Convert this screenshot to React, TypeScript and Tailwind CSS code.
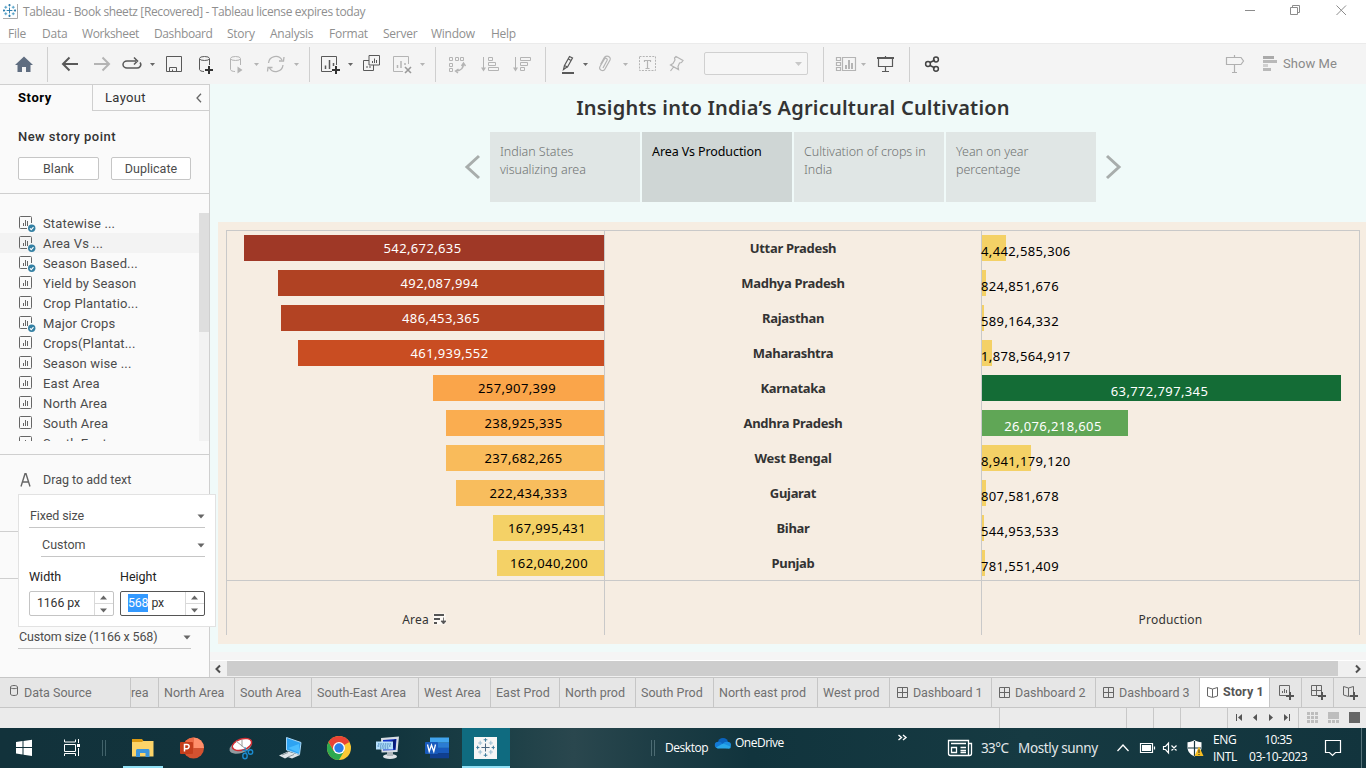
import type { ReactNode } from 'react';

const UI = "font-['Roboto','Liberation_Sans',sans-serif]";
const SEGOE = "font-['Open_Sans','Noto_Sans',sans-serif]";
const CHART = "font-['Noto_Sans','Open_Sans',sans-serif]";

type SegProps = { x: number; to: number; y: number; h: number; children?: ReactNode };

/* A slice of a bar; its drawing uses window coordinates. */
function Seg({ x, to, y, h, children }: SegProps) {
  return (
    <svg className="block shrink-0" width={to - x} height={h} viewBox={`${x} ${y} ${to - x} ${h}`} fill="none">
      {children}
    </svg>
  );
}

function Tool({ x, to, children }: { x: number; to: number; children?: ReactNode }) {
  return (
    <Seg x={x} to={to} y={43} h={41}>
      {children}
    </Seg>
  );
}

function Sep({ x }: { x: number }) {
  return <path d={`M${x + 0.5} 47V82`} stroke="#cfcfcf" />;
}

function Drop({ x, c = '#666' }: { x: number; c?: string }) {
  return <path d={`M${x - 2.5} 63h5l-2.5 3z`} fill={c} />;
}

const D = '#595959';
const L = '#b4b4b4';

function TableauMark({ cx, cy, s, light }: { cx: number; cy: number; s: number; light?: boolean }) {
  const a = light ? '#3f7d9e' : '#2678a8';
  const b = light ? '#9dbfd4' : '#4a9bc4';
  return (
    <g transform={`translate(${cx} ${cy}) scale(${s})`} strokeWidth={light ? 1 : 1.3}>
      <path d="M-4 0h8M0-4v8" stroke={light ? '#4a6680' : a} />
      <path d="M-7.2-4.5h4M-5.2-6.5v4M3.2-4.5h4M5.2-6.5v4M-7.2 4.5h4M-5.2 2.5v4M3.2 4.5h4M5.2 2.5v4" stroke={b} />
      <path d="M-1.8-7.5h3.6M0-9v3.4M-1.8 7.5h3.6M0 5.6v3.4M-9 0h3M-7.7-1.8v3.6M6 0h3M7.7-1.8v3.6" stroke={a} />
    </g>
  );
}

function TitleBar() {
  return (
    <header className={`flex h-6 shrink-0 bg-white ${SEGOE}`}>
      <svg width="22" height="24" viewBox="0 0 22 24" fill="none" className="shrink-0">
        <path d="M3 18.5h14.5V4" stroke="#aaa" />
        <TableauMark cx={9.5} cy={10.5} s={0.72} />
      </svg>
      <span className="ml-px text-[12px] leading-6 tracking-[-0.38px] text-[#8f8f8f]">
        Tableau - Book sheetz [Recovered] - Tableau license expires today
      </span>
      <svg width="136" height="24" viewBox="1230 0 136 24" fill="none" stroke="#8c8c8c" className="ml-auto shrink-0">
        <path d="M1245 10.5h10M1290.5 7.5h7v7h-7zM1292.500 7.500v-2h7v7h-2M1336.500 5.500l9.500 9.500M1346 5.500l-9.500 9.500" />
      </svg>
    </header>
  );
}

function MenuBar() {
  const items: [string, string][] = [
    ['File', 'w-[34px]'],
    ['Data', 'w-10'],
    ['Worksheet', 'w-[72px] tracking-[-0.38px]'],
    ['Dashboard', 'w-[73px] tracking-[-0.38px]'],
    ['Story', 'w-[43px]'],
    ['Analysis', 'w-[59px]'],
    ['Format', 'w-[54px]'],
    ['Server', 'w-12'],
    ['Window', 'w-[60px]'],
    ['Help', 'w-10'],
  ];
  return (
    <nav className={`flex h-[19px] shrink-0 bg-white pl-2 text-[12px] leading-[19px] tracking-[-0.25px] text-[#8f8f8f] ${SEGOE}`}>
      {items.map(([t, w]) => (
        <span key={t} className={`shrink-0 whitespace-nowrap ${w}`}>
          {t}
        </span>
      ))}
    </nav>
  );
}

function Toolbar() {
  return (
    <div className="flex h-[41px] shrink-0 border-t border-[#ebebeb] bg-[#f4f4f4] [&>svg]:-mt-px">
      <Tool x={0} to={50}>
        <path d="M24 56.500l9 8.500h-2.500V72h-4.500v-5h-4v5h-4.500v-7H15z" fill="#5f6d80" />
        <Sep x={47} />
      </Tool>
      <Tool x={50} to={116}>
        <path d="M63 64h15M69.500 57.500L63 64l6.500 6.500" stroke={D} strokeWidth="2" />
        <path d="M94 64h15M102.500 57.500L109 64l-6.500 6.500" stroke={L} strokeWidth="2" />
      </Tool>
      <Tool x={116} to={160}>
        <path d="M136 61h-9a4 3.500 0 000 7h9a4 3.500 0 004-5.500M134 57.500l3.500 3.500-3.500 3.500" stroke={D} strokeWidth="1.500" />
        <Drop x={152.5} />
      </Tool>
      <Tool x={160} to={190}>
        <path d="M166.500 56.500h15v15h-15zM169.500 71v-3.500h7V71M172.500 71v-1.500" stroke={D} />
      </Tool>
      <Tool x={190} to={222}>
        <path d="M199.500 59v10.500c0 1 2 2 4.500 2M209.500 59v6" stroke={D} />
        <ellipse cx="204.500" cy="58.500" rx="5" ry="2" stroke={D} />
        <path d="M209 66v8M205 70h8" stroke="#333" strokeWidth="2" />
      </Tool>
      <Tool x={222} to={262}>
        <path d="M230.500 59v10.500c0 1 2 2 4.500 2M240.500 59v6" stroke={L} />
        <ellipse cx="235.500" cy="58.500" rx="5" ry="2" stroke={L} />
        <path d="M237.500 66.500v7l5-3.500z" fill={L} />
        <Drop x={256.5} c={L} />
      </Tool>
      <Tool x={262} to={315}>
        <path d="M268.500 63a7.300 7.300 0 0113.500-3M283 65a7.300 7.300 0 01-13.500 3M279 61h4.500l.5-4M272.500 67.500H268l-.5 4" stroke={L} strokeWidth="1.300" />
        <Drop x={296.5} c={L} />
        <Sep x={309} />
      </Tool>
      <Tool x={315} to={358}>
        <path d="M332 71.500h-10.500v-15h15V65" stroke={D} />
        <path d="M325.500 69v-3.500M329.500 69v-9M333.500 66v-3" stroke={D} strokeWidth="1.500" />
        <path d="M336 66v8M332 70h8" stroke="#333" strokeWidth="2" />
        <Drop x={350.5} />
      </Tool>
      <Tool x={358} to={386}>
        <path d="M369 55.500h10.500v9.500H369zM369 60.500h-5.500v10h10V65M367 68v-2M370 68v-2" stroke={D} />
        <path d="M372.500 63v-2M374.500 63v-4.500M376.500 63v-3" stroke={D} />
      </Tool>
      <Tool x={386} to={440}>
        <path d="M403 71.500h-9.500v-15h15V64" stroke={L} />
        <path d="M397.500 68v-3M401 68v-7M405 65v-2" stroke={L} strokeWidth="1.500" />
        <path d="M405 67l6 6M411 67l-6 6" stroke="#999" strokeWidth="1.600" />
        <Drop x={422.5} c={L} />
        <Sep x={435} />
      </Tool>
      <Tool x={440} to={474}>
        <path d="M449.500 57.500h3v3h-3zM455.500 57.500h3v3h-3zM460.500 57.500h3v3h-3zM449.500 63.500h3v3h-3zM449.500 68.500h3v3h-3z" stroke={L} />
        <path d="M463.500 64c0 4-2.500 6.500-7.500 7M461.500 66l2-3 2 3M458.500 69l-3 2 2.500 2" stroke={L} strokeWidth="1.400" />
      </Tool>
      <Tool x={474} to={506}>
        <path d="M483.500 57v13M488.500 57.500h4v3h-4zM488.500 62.500h7v3h-7zM488.500 67.500h10v3h-10z" stroke={L} />
        <path d="M481 67.500h5l-2.500 4z" fill={L} />
      </Tool>
      <Tool x={506} to={552}>
        <path d="M515.500 57v13M520.500 57.500h10v3h-10zM520.500 62.500h7v3h-7zM520.500 67.500h4v3h-4z" stroke={L} />
        <path d="M513 67.500h5l-2.500 4z" fill={L} />
        <Sep x={545} />
      </Tool>
      <Tool x={552} to={592}>
        <path d="M562 73h12" stroke={D} strokeWidth="2" />
        <path d="M569.500 56.500l3 1.500-5 9-3-1.500zM564.500 65.500l-1 4 3.500-2.500M568.500 59l2.500 1.500" stroke={D} strokeWidth="1.200" />
        <Drop x={585.5} />
      </Tool>
      <Tool x={592} to={632}>
        <path d="M600.500 64.500l3.500-6.500c2-3.500 7.500-1.500 6 2l-5 9c-1.500 3-7 1-5-2.500l4.500-7.500c1-1.500 3.500-.5 2.500 1.500l-4 7.500" stroke={L} strokeWidth="1.200" />
        <Drop x={625.5} c={L} />
      </Tool>
      <Tool x={632} to={664}>
        <path d="M639.500 56.500h16v14h-16z" stroke={L} strokeDasharray="2 1.200" />
        <path d="M644.500 62v-1.500h6V62M647.500 60.500v8M645.500 68.500h4" stroke={L} strokeWidth="1.200" />
      </Tool>
      <Tool x={664} to={704}>
        <path d="M676 56.500l7 4-1.500 2-2 .500-1.500 3.500.500 3-8-4.500 2.500-1.500 2-3.500-.5-2zM673.500 67l-3 4" stroke={L} strokeWidth="1.200" />
      </Tool>
      <div className="mt-2 h-[23px] w-[104px] shrink-0 rounded-[2px] border border-[#d0d0d0] bg-[#f6f6f6]">
        <svg width="102" height="21" className="block">
          <path d="M90 9h7l-3.500 4z" fill="#c8c8c8" />
        </svg>
      </div>
      <Tool x={808} to={870}>
        <Sep x={823} />
        <path d="M836.500 57.500h4v3h-4zM836.500 62.500h4v3h-4zM836.500 67.500h4v3h-4zM842.500 57.500h13v13h-13z" stroke={L} strokeWidth="1.200" />
        <path d="M846 69v-4M849 69v-9M852 69v-6" stroke={L} strokeWidth="2" />
        <Drop x={863.5} c={L} />
      </Tool>
      <Tool x={870} to={915}>
        <path d="M877 58h17" stroke={D} strokeWidth="2" />
        <path d="M878.500 58v8.500h14V58M885.500 56v1M885.500 67v4M882 71.500h7" stroke={D} strokeWidth="1.200" />
        <Sep x={909} />
      </Tool>
      <Tool x={915} to={950}>
        <path d="M930 62.500l5-2.500M930 65.500l5 2.500" stroke="#444" strokeWidth="1.500" />
        <circle cx="928" cy="64" r="2.400" stroke="#444" strokeWidth="1.500" />
        <circle cx="936" cy="59.500" r="2.400" stroke="#444" strokeWidth="1.500" />
        <circle cx="936" cy="68.800" r="2.400" stroke="#444" strokeWidth="1.500" />
      </Tool>
      <div className="flex-1" />
      <Tool x={1220} to={1282}>
        <path d="M1226.500 57.500h14.500l2.500 3.500-2.500 3.500h-14.500zM1234.500 55v2.500M1234.500 65v7M1232 72.500h5" stroke="#b0b0b0" strokeWidth="1.200" />
        <path d="M1263 56h11v3h-11z" fill="#aaa" />
        <path d="M1263 60h14v3h-14zM1263 68h8v3h-8z" fill="#b9b9b9" />
        <path d="M1263 64h5v3h-5z" fill="#d0d0d0" />
      </Tool>
      <span className={`w-[84px] shrink-0 pl-px text-[13px] leading-[39px] tracking-[0.05px] text-[#8a8a8a] ${UI}`}>Show Me</span>
    </div>
  );
}

function SheetIcon({ checked }: { checked?: boolean }) {
  return (
    <svg width="18" height="20" viewBox="0 0 18 20" fill="none" className="shrink-0">
      <path
        d={
          checked
            ? 'M8 15.500H1.500a1 1 0 01-1-1v-10a1 1 0 011-1h10a1 1 0 011 1V10'
            : 'M1.500 3.500h10a1 1 0 011 1v10a1 1 0 01-1 1h-10a1 1 0 01-1-1v-10a1 1 0 011-1z'
        }
        stroke="#666"
      />
      <path d="M4.500 13v-3M6.500 13V7M8.500 13V8" stroke="#666" />
      {checked && (
        <>
          <circle cx="12.700" cy="15.300" r="3.700" fill="#3480a3" />
          <path d="M10.900 15.300l1.400 1.300 2.200-2.400" stroke="#fff" strokeWidth="1.100" />
        </>
      )}
    </svg>
  );
}

function Caret() {
  return (
    <svg width="8" height="5" viewBox="0 0 8 5" className="shrink-0">
      <path d="M.5.500h7L4 4.500z" fill="#666" />
    </svg>
  );
}

function Spinner({ focus, children }: { focus?: boolean; children: ReactNode }) {
  return (
    <div className={`flex h-[25px] w-[85px] rounded-[2px] border bg-white ${focus ? 'border-[#555]' : 'border-[#c4c4c4]'}`}>
      <span className="w-16 pl-[7px] text-[12.300px] leading-[23px] tracking-[-0.1px] whitespace-nowrap text-[#333]">{children}</span>
      <svg width="19" height="23" viewBox="0 0 19 23" fill="none">
        <path d="M.5 0v23M0 11.500h19" stroke="#d9d9d9" />
        <path d="M6 7.500h7L9.500 3.500zM6 16.500h7l-3.500 4z" fill="#666" />
      </svg>
    </div>
  );
}

const SHEETS: [string, boolean][] = [
  ['Statewise ...', true],
  ['Area Vs ...', true],
  ['Season Based...', true],
  ['Yield by Season', false],
  ['Crop Plantatio...', false],
  ['Major Crops', true],
  ['Crops(Plantat...', false],
  ['Season wise ...', false],
  ['East Area', false],
  ['North Area', false],
  ['South Area', false],
  ['South East...', false],
];

function Sidebar() {
  return (
    <aside className={`relative flex w-[210px] shrink-0 flex-col border-t border-r border-[#cfcfcf] bg-[#fafafa] text-[#4c4c4c] ${UI}`}>
      <div className="flex h-[26px] shrink-0 text-[13px] leading-[25px]">
        <span className="w-[92px] pl-[18px] font-bold tracking-[0.6px] text-black">Story</span>
        <div className="flex flex-1 items-center border-b border-l border-[#cfcfcf] pr-[7px] pl-3 text-[#333]">
          <span className="tracking-[0.35px]">Layout</span>
          <svg width="6" height="10" viewBox="0 0 6 10" fill="none" className="ml-auto">
            <path d="M5 .7L1 5l4 4.300" stroke="#666" strokeWidth="1.300" />
          </svg>
        </div>
      </div>
      <div className="h-[46px] shrink-0 pl-[18px] pt-4 text-[13px] leading-5 font-medium tracking-[0.45px] text-[#333]">New story point</div>
      <div className="flex shrink-0 gap-3 pl-[18px] text-[12.500px] leading-[21px]">
        <span className="h-[23px] w-[81px] rounded-[2px] border border-[#c6c6c6] bg-white text-center">Blank</span>
        <span className="h-[23px] w-20 rounded-[2px] border border-[#c6c6c6] bg-white text-center">Duplicate</span>
      </div>
      <div className="mt-[13px] h-px shrink-0 bg-[#cfcfcf]" />
      <div className="mt-[19px] flex h-[228px] shrink-0">
        <div className="flex-1 overflow-hidden">
          {SHEETS.map(([t, c]) => (
            <div key={t} className={`flex h-5 pl-[19px] text-[13px] leading-[22px] ${t === 'Area Vs ...' ? 'bg-[#f3f3f3]' : ''}`}>
              <SheetIcon checked={c} />
              <span className="ml-1.5 tracking-[0.15px] whitespace-nowrap">{t}</span>
            </div>
          ))}
        </div>
        <div className="w-2.5 bg-[#f2f2f2]">
          <div className="h-[119px] bg-[#dedede]" />
        </div>
      </div>
      <div className="mt-[13px] h-px shrink-0 bg-[#cfcfcf]" />
      <div className="flex h-[76px] shrink-0 items-center pb-[26px] pl-5">
        <svg width="11" height="14" viewBox="0 0 11 14" fill="none">
          <path d="M1 13.500L5 .8h1l4 12.700M2.500 9h6" stroke="#666" strokeWidth="1.400" />
        </svg>
        <span className="ml-3 text-[12.500px]">Drag to add text</span>
      </div>
      <div className="h-px shrink-0 bg-[#cfcfcf]" />
      <div className="mt-[46px] h-px shrink-0 bg-[#cfcfcf]" />
      <div className="mt-[47px] ml-[18px] flex h-[23px] w-[173px] shrink-0 items-center border-b border-[#c6c6c6] text-[12.500px]">
        <span className="pl-px tracking-[-0.16px] whitespace-nowrap">Custom size (1166 x 568)</span>
        <span className="ml-auto">
          <Caret />
        </span>
      </div>
      <div className="absolute top-[409px] left-[18px] z-10 flex h-[133px] w-[198px] flex-col border border-[#e2e2e2] bg-white pl-[10px] text-[12.500px]">
        <div className="mt-[9px] flex h-[24px] w-44 items-center justify-between border-b border-[#c6c6c6] pt-0.5 pl-px">
          <span className="tracking-[-0.1px]">Fixed size</span>
          <Caret />
        </div>
        <div className="mt-[5px] ml-3 flex h-6 w-[164px] items-center justify-between border-b border-[#c6c6c6] pt-0.5 pl-px">
          <span>Custom</span>
          <Caret />
        </div>
        <div className="mt-[11px] flex h-[18px] gap-[6px] leading-[18px] text-[#222]">
          <span className="w-[85px]">Width</span>
          <span>Height</span>
        </div>
        <div className="mt-[5px] flex gap-[6px]">
          <Spinner>1166 px</Spinner>
          <Spinner focus>
            <span className="bg-[#3399ff] py-0.5 text-white">568</span> px
          </Spinner>
        </div>
      </div>
    </aside>
  );
}

type Row = { state: string; area: string; aw: number; ac: string; prod: string; pw: number; pc: string };
const ROWS: Row[] = [
  { state: 'Uttar Pradesh', area: '542,672,635', aw: 360, ac: 'bg-[#9f3826] text-white', prod: '4,442,585,306', pw: 24, pc: 'bg-[#f4d166]' },
  { state: 'Madhya Pradesh', area: '492,087,994', aw: 326, ac: 'bg-[#b04223] text-white', prod: '824,851,676', pw: 4, pc: 'bg-[#f4d166]' },
  { state: 'Rajasthan', area: '486,453,365', aw: 323, ac: 'bg-[#b34323] text-white', prod: '589,164,332', pw: 2, pc: 'bg-[#f4d166]' },
  { state: 'Maharashtra', area: '461,939,552', aw: 306, ac: 'bg-[#c94d22] text-white', prod: '1,878,564,917', pw: 10, pc: 'bg-[#f4d166]' },
  { state: 'Karnataka', area: '257,907,399', aw: 171, ac: 'bg-[#faa54a] text-black', prod: '63,772,797,345', pw: 359, pc: 'bg-[#146c36] text-white' },
  { state: 'Andhra Pradesh', area: '238,925,335', aw: 158, ac: 'bg-[#faad50] text-black', prod: '26,076,218,605', pw: 146, pc: 'bg-[#60a656] text-white' },
  { state: 'West Bengal', area: '237,682,265', aw: 158, ac: 'bg-[#f9bb5b] text-black', prod: '8,941,179,120', pw: 49, pc: 'bg-[#f4d166]' },
  { state: 'Gujarat', area: '222,434,333', aw: 148, ac: 'bg-[#f8bd5d] text-black', prod: '807,581,678', pw: 4, pc: 'bg-[#f4d166]' },
  { state: 'Bihar', area: '167,995,431', aw: 111, ac: 'bg-[#f4d166] text-black', prod: '544,953,533', pw: 2, pc: 'bg-[#f4d166]' },
  { state: 'Punjab', area: '162,040,200', aw: 107, ac: 'bg-[#f4d166] text-black', prod: '781,551,409', pw: 3, pc: 'bg-[#f4d166]' },
];

function Chart() {
  return (
    <div className={`ml-2 h-[422px] shrink-0 bg-[#f6ede2] pt-2 pl-2 text-[13px] text-[#333] ${CHART}`}>
      <div className="grid h-[405px] w-[1134px] grid-cols-[378px_377px_378px] grid-rows-[350px_54px] border-t border-l border-[#c9c9c9]">
        <div className="flex flex-col items-end border-r border-b border-[#c9c9c9]">
          {ROWS.map((r) => (
            <div key={r.state} className="flex h-[35px] shrink-0 items-start pt-1">
              <div className={`h-[26px] pr-[3px] text-center leading-[26px] tracking-[0.370px] ${r.ac}`} style={{ width: r.aw }}>
                {r.area}
              </div>
            </div>
          ))}
        </div>
        <div className="border-r border-b border-[#c9c9c9] text-center font-bold tracking-[-0.3px]">
          {ROWS.map((r) => (
            <div key={r.state} className="h-[35px] leading-[34px]">
              {r.state}
            </div>
          ))}
        </div>
        <div className="border-r border-b border-[#c9c9c9]">
          {ROWS.map((r) => (
            <div key={r.state} className="h-[35px] pt-1">
              <div className={`h-[26px] text-center leading-[32px] tracking-[0.370px] whitespace-nowrap ${r.pc}`} style={{ width: r.pw }}>
                {r.pw > 100 ? <span className="mr-1">{r.prod}</span> : <span className="float-left -ml-px text-black">{r.prod}</span>}
              </div>
            </div>
          ))}
        </div>
        <div className="flex items-center justify-center gap-1 border-r border-[#c9c9c9] pt-[22px] pl-[17px] text-[12px]">
          <span className="leading-[33px] tracking-[0.2px]">Area</span>
          <svg width="13" height="12" viewBox="0 0 13 12" fill="none">
            <path d="M.5.500h12v11H.5z" fill="#fcf9f5" />
            <path d="M1 2h10M1 6h6M1 10h3" stroke="#555" strokeWidth="2" />
            <path d="M10.500 4.500v5M8 8h5l-2.500 3z" stroke="#555" strokeWidth=".8" fill="#555" />
          </svg>
        </div>
        <div className="border-r border-[#c9c9c9]" />
        <div className="border-r border-[#c9c9c9] pt-[22px] text-center text-[12px] leading-[33px] tracking-[0.2px]">Production</div>
      </div>
    </div>
  );
}

const POINTS: [string, boolean][] = [
  ['Indian States visualizing area', false],
  ['Area Vs Production', true],
  ['Cultivation of crops in India', false],
  ['Yean on year percentage', false],
];

function StoryView() {
  return (
    <main className="flex min-w-0 flex-1 flex-col bg-[#f0faf9]">
      <h1 className={`mt-2 h-8 shrink-0 pl-[10px] text-center text-[20px] leading-[31px] font-semibold tracking-[0.220px] text-[#333] ${CHART}`}>
        Insights into India’s Agricultural Cultivation
      </h1>
      <div className={`mt-2 flex h-[70px] shrink-0 items-center pl-[254px] text-[13px] ${CHART}`}>
        <svg width="18" height="26" viewBox="0 0 18 26" fill="none" className="mr-2">
          <path d="M15 2L3 13l12 11" stroke="#a8adac" strokeWidth="3" />
        </svg>
        <div className="flex h-full gap-[2px]">
          {POINTS.map(([t, on]) => (
            <div
              key={t}
              className={`w-[150px] pt-[11px] pr-2 pl-[10px] text-[12.500px] leading-[18px] ${on ? 'bg-[#cfd6d5] tracking-[-0.1px] text-black' : 'bg-[#e0e6e5] font-light tracking-[-0.04px] text-[#707473]'}`}
            >
              {t}
            </div>
          ))}
        </div>
        <svg width="18" height="26" viewBox="0 0 18 26" fill="none" className="ml-2">
          <path d="M3 2l12 11L3 24" stroke="#a8adac" strokeWidth="3" />
        </svg>
      </div>
      <div className="h-5 shrink-0" />
      <Chart />
      <div className="h-2 shrink-0" />
      <div className="h-2 shrink-0 bg-[#f5f5f5]" />
      <div className="flex h-[17px] shrink-0 border-t border-white bg-[#f0f0f0]">
        <svg width="17" height="16" fill="none" className="shrink-0">
          <path d="M10 4.500L6.500 8l3.500 3.500" stroke="#505050" strokeWidth="2" />
        </svg>
        <div className="h-[15px] flex-1 bg-[#cdcdcd]" />
        <svg width="28" height="16" fill="none" className="shrink-0">
          <path d="M18 4.500L21.500 8 18 11.500" stroke="#505050" strokeWidth="2" />
        </svg>
      </div>
    </main>
  );
}

function GridGlyph() {
  return <path d="M.5.500h10v10H.500zM5.500.500v10M.5 5.500h10" stroke="#666" />;
}

function BookGlyph() {
  return <path d="M.5 1.500l5 1.500 5-1.500v8.500l-5 1.500-5-1.500zM5.500 3v8" stroke="#666" />;
}

const TABS: [string, string, string?][] = [
  ['rea', 'w-7'],
  ['North Area', 'w-[76px] pl-[5px]'],
  ['South Area', 'w-[77px] pl-[5px]'],
  ['South-East Area', 'w-[107px] pl-[5px]'],
  ['West Area', 'w-[72px] pl-[5px]'],
  ['East Prod', 'w-[69px] pl-[5px]'],
  ['North prod', 'w-[76px] pl-[5px]'],
  ['South Prod', 'w-[78px] pl-[5px]'],
  ['North east prod', 'w-[104px] pl-[5px]'],
  ['West prod', 'w-[72px] pl-[5px]'],
  ['Dashboard 1', 'w-[102px] pl-[7px] tracking-[-0.1px]', 'grid'],
  ['Dashboard 2', 'w-[104px] pl-[7px]', 'grid'],
  ['Dashboard 3', 'w-[104px] pl-[7px]', 'grid'],
  ['Story 1', 'w-[70px] pl-[7px] pb-[2px] bg-white !text-[#555] font-bold tracking-[0.1px]', 'book'],
];

function SheetTabs() {
  return (
    <div className={`flex h-[31px] shrink-0 border-t border-b border-[#c6c6c6] bg-[#e6e6e6] text-[12.500px] leading-[29px] text-[#707070] ${UI}`}>
      <div className="flex w-[130px] shrink-0 items-center pl-[10px]">
        <svg width="8" height="11" viewBox="0 0 8 11" fill="none" stroke="#666" className="-mt-1">
          <path d="M.5 2v7c0 2 7 2 7 0V2c0-2-7-2-7 0zM.5 2.500c0 1.500 7 1.500 7 0" />
        </svg>
        <span className="ml-[6px]">Data Source</span>
      </div>
      {TABS.map(([t, cls, icon]) => (
        <div key={t} className={`flex shrink-0 items-center border-l border-[#c6c6c6] whitespace-nowrap ${cls}`}>
          {icon && (
            <svg width="11" height="12" viewBox="0 0 11 12" fill="none" className="mr-[5px] shrink-0">
              {icon === 'grid' ? <GridGlyph /> : <BookGlyph />}
            </svg>
          )}
          {t}
        </div>
      ))}
      {['sheet', 'grid', 'book'].map((k) => (
        <div key={k} className="flex w-8 shrink-0 items-center border-l border-[#c6c6c6] pl-[9px]">
          <svg width="16" height="16" viewBox="0 0 16 16" fill="none">
            {k === 'sheet' && <path d="M8 10.500H.500V.500h10V7M3.500 8V6M5.500 8V4M7.500 8V5" stroke="#666" />}
            {k === 'grid' && <path d="M7 10.500H.500V.500h10V7M5.500.500v10M.5 5.500h10" stroke="#666" />}
            {k === 'book' && <path d="M7 11l-1.500.5-5-1.500V1.500l5 1.500 5-1.500V7M5.500 3v8" stroke="#666" />}
            <path d="M11 7v8M7 11h8" stroke="#555" strokeWidth="2" />
          </svg>
        </div>
      ))}
    </div>
  );
}

function StatusBar() {
  return (
    <div className="flex h-5 shrink-0 justify-end bg-[#ebebeb]">
      <Seg x={990} to={1366} y={708} h={20}>
        <path d="M999.500 708v20M1126.500 708v20M1153.500 708v20M1180.500 708v20M1227.500 708v20M1298.500 708v20" stroke="#c8c8c8" />
        <path d="M1242 714v7l-4-3.500zM1257 714v7l-4-3.500zM1269 714v7l4-3.500zM1284 714v7l4-3.500z" fill="#555" />
        <path d="M1236.500 714v7M1289.500 714v7" stroke="#555" />
        <path d="M1307 712h3v3h-3zM1311 712h3v3h-3zM1315 712h3v3h-3zM1307 716h3v3h-3zM1311 716h3v3h-3zM1315 716h3v3h-3zM1307 720h3v3h-3zM1311 720h3v3h-3zM1315 720h3v3h-3zM1328 712h11v7h-11zM1328 720h3v3h-3zM1332 720h3v3h-3zM1336 720h3v3h-3z" fill="#bdbdbd" />
        <path d="M1349 712h11v11h-11z" fill="#666" />
      </Seg>
    </div>
  );
}

function TB({ x, to, children }: { x: number; to: number; children?: ReactNode }) {
  return (
    <Seg x={x} to={to} y={728} h={40}>
      {children}
    </Seg>
  );
}

function Taskbar() {
  return (
    <footer
      className={`flex h-10 shrink-0 bg-[linear-gradient(90deg,#12323b_0%,#11343d_28%,#1d4047_37%,#2a474e_42%,#1d3d45_48%,#11343d_55%,#163a42_75%,#12343d_100%)] text-[12px] text-white ${SEGOE}`}
    >
      <TB x={0} to={115}>
        <path d="M16 742l6.500-1v6H16zM23.500 741l8.500-1.300v7.300h-8.500zM16 748h6.500v6.500l-6.500-1zM23.500 748H32v8l-8.500-1.300z" fill="#fff" />
        <path d="M64.500 739.500v2.500h11v-2.500M64.500 744.500h11v7h-11zM64.500 756v-2.500h11v2.500M78.500 739v4M78.500 748v8" stroke="#fff" />
        <path d="M77 744h3v3h-3z" fill="#fff" />
        <path d="M102.500 740v16M105.500 740v16" stroke="#41626a" />
      </TB>
      <TB x={115} to={172}>
        <path d="M132 739h10l1.500 2v4H132z" fill="#dc9a12" />
        <path d="M132 742h10l1-1h10.500v15.500H132z" fill="#fcd468" />
        <path d="M136 757v-6c0-1.500.500-2 2-2h9.500c1.500 0 2 .5 2 2v6h-4v-4h-5.500v4z" fill="#3d96dc" />
        <path d="M123 766h40v2h-40z" fill="#90e0f5" />
      </TB>
      <TB x={172} to={220}>
        <circle cx="193.500" cy="748" r="10.500" fill="#d35230" />
        <path d="M193.500 737.500a10.500 10.500 0 0110.500 10.500h-10.500z" fill="#ff8f6b" />
        <path d="M193.500 737.500A10.500 10.500 0 00183 748h10.500z" fill="#ed6c47" />
        <rect x="180" y="742" width="13" height="12" rx="1" fill="#c43e1c" />
        <path d="M184.500 751.500v-7h2.500a2 2 0 010 4.200h-2.500" stroke="#fff" strokeWidth="1.500" />
      </TB>
      <TB x={220} to={268}>
        <ellipse cx="240.500" cy="747" rx="11.500" ry="6" transform="rotate(-18 240.500 747)" fill="#929ba0" />
        <ellipse cx="242" cy="744.500" rx="10" ry="5.500" transform="rotate(-18 242 744.500)" fill="#fff" stroke="#d12d33" strokeWidth="1.500" />
        <path d="M236 741l11 9M242 739.500v7" stroke="#999" />
        <circle cx="250.500" cy="752" r="2.200" stroke="#1b8bd0" strokeWidth="1.400" />
        <ellipse cx="245" cy="756" rx="2.200" ry="2.800" stroke="#1b8bd0" strokeWidth="1.400" />
        <path d="M249 751l-7-1M246 753l-1-6" stroke="#1b8bd0" />
      </TB>
      <TB x={268} to={316}>
        <path d="M286.500 737.500l14.500 5-1.500 12-13-4.500z" fill="#2ea3f2" stroke="#a7d7f7" />
        <path d="M288 748l11-4v9z" fill="#49bdff" />
        <path d="M279 755.500l9-4 12 3.500-8 3.500-4-1.500-3 1.500z" fill="#dfe5e8" />
        <path d="M282 755l6-2.500M288 757l6-2.500" stroke="#88969d" />
      </TB>
      <TB x={316} to={364}>
        <circle cx="339" cy="748" r="12" fill="#fcc934" />
        <path d="M339 748l-10.400-6a12 12 0 0120.800 0z" fill="#ea4335" />
        <path d="M328.600 742a12 12 0 0010.400 18l5.200-9-10.400 0z" fill="#2da94f" />
        <path d="M328.600 742l5.200 9 5.200-9z" fill="#ea4335" />
        <circle cx="339" cy="748" r="6" fill="#fff" />
        <circle cx="339" cy="748" r="4.700" fill="#2b7de9" />
      </TB>
      <TB x={364} to={412}>
        <path d="M381 738l18-1.500-1.500 15.500-16 .5z" fill="#d8dde3" />
        <path d="M383 740l13.500-1-1 11-12.500.5z" fill="#0f2fc4" />
        <path d="M389 742l7-3-.8 11z" fill="#071a75" />
        <path d="M376 741.500h17v8h-17z" fill="#b5dffc" />
        <path d="M378 744h13M377.500 746h13M380 748h9" stroke="#3277ae" strokeDasharray="1.500 .8" />
        <ellipse cx="390" cy="756.500" rx="7" ry="2.500" fill="#dfe3e6" />
        <path d="M387 752h6v4h-6z" fill="#aeb6bb" />
      </TB>
      <TB x={412} to={462}>
        <path d="M430 737.500h19v5.200h-19z" fill="#41a5ee" />
        <path d="M430 742.700h19v5.200h-19z" fill="#2b7cd3" />
        <path d="M430 747.900h19v5.200h-19z" fill="#185abd" />
        <path d="M430 753.100h19v5.200h-19z" fill="#103f91" />
        <rect x="425" y="742" width="13" height="12" rx="1" fill="#185abd" />
        <path d="M427.500 744.500l1.700 7 2.300-6.500 2.300 6.500 1.700-7" stroke="#fff" strokeWidth="1.300" />
      </TB>
      <div className="h-10 w-12 shrink-0 border-b-2 border-[#90e0f5] bg-[#0f6b80]">
        <svg width="48" height="38" viewBox="0 0 48 38" fill="none" className="block">
          <path d="M12 9h23v22H12z" fill="#f6f6f6" />
          <TableauMark cx={23.5} cy={19.5} s={1.02} light />
        </svg>
      </div>
      <TB x={510} to={665}>
        <path d="M651.500 740v16M654.500 740v16" stroke="#4d6c73" />
      </TB>
      <span className="w-[49px] shrink-0 leading-10 tracking-[-0.45px]">Desktop</span>
      <TB x={714} to={735}>
        <ellipse cx="723" cy="742.500" rx="5" ry="4.500" fill="#0a63be" />
        <ellipse cx="718.500" cy="745" rx="3.700" ry="3.200" fill="#1479d4" />
        <ellipse cx="727" cy="745" rx="4" ry="3.200" fill="#1a8ee0" />
        <path d="M716 747.500l7-4 7.500 3c1 3-3 2-4 2h-8c-1 0-2-.5-2.500-1z" fill="#28a8ea" />
      </TB>
      <span className="w-[154px] shrink-0 leading-[29px] tracking-[-0.5px]">OneDrive</span>
      <TB x={889} to={981}>
        <path d="M898.500 735l3 2.500-3 2.500M903 735l3 2.500-3 2.500" stroke="#fff" strokeWidth="1.400" />
        <path
          d="M948.500 740.500h20v15h-18a2 2 0 01-2-2zM968.500 743.500h3v10a2 2 0 01-2 2h-2M951 743.500h15M960.500 747.500h5.500M960.500 750.500h5.500M960.500 752.500h5.500M951.500 747.500h5v5h-5z"
          stroke="#fff"
          strokeWidth="1.300"
        />
      </TB>
      <span className="w-[37px] shrink-0 font-['Noto_Sans',sans-serif] text-[13.500px] leading-[41px] tracking-[-0.6px] whitespace-nowrap text-[#e3e8ea]">33°C</span>
      <span className="w-[92px] shrink-0 font-['Noto_Sans',sans-serif] text-[13.500px] leading-[41px] tracking-[-0.35px] whitespace-nowrap text-[#e3e8ea]">Mostly sunny</span>
      <TB x={1110} to={1213}>
        <path d="M1117.500 751l5.500-6 5.500 6" stroke="#fff" strokeWidth="1.300" />
        <path d="M1140.500 743.500h12v9h-12zM1154.500 746.500v3" stroke="#fff" strokeWidth="1.200" />
        <path d="M1142 745h9v6h-9z" fill="#fff" />
        <path d="M1163.500 746.500h2l3-3.500v10l-3-3.500h-2zM1171.500 745.500l5 5M1176.500 745.500l-5 5" stroke="#fff" strokeWidth="1.200" />
        <path d="M1194.500 740c2 1.500 4 2 7 2.200v5c0 5-3.500 7.500-7 9.300-3.500-1.800-7-4.300-7-9.300v-5c3-.2 5-.7 7-2.200z" fill="#fff" />
        <path d="M1194.500 741v15M1188 748h13" stroke="#17363e" strokeWidth="1.200" />
        <path d="M1199 746.500l4.500 9.500h-9z" fill="#f5bd22" />
        <path d="M1199 749.500v3.500M1199 754v1" stroke="#222" />
      </TB>
      <div className="w-9 shrink-0 pt-[3px] leading-[17px] tracking-[-0.35px] whitespace-nowrap">
        <div>ENG</div>
        <div>INTL</div>
      </div>
      <div className="w-[58px] shrink-0 pt-[3px] text-center text-[12px] leading-[17px] tracking-[-0.6px] whitespace-nowrap">
        <div>10:35</div>
        <div className="tracking-[-0.45px]">03-10-2023</div>
      </div>
      <TB x={1307} to={1366}>
        <path d="M1325.500 740.500h15v12h-5l-3 3-3-3h-4z" stroke="#fff" strokeWidth="1.200" />
        <path d="M1361.500 728v40" stroke="#56737a" />
      </TB>
    </footer>
  );
}

export default function App() {
  return (
    <div className="flex h-[768px] w-[1366px] flex-col overflow-hidden bg-white">
      <TitleBar />
      <MenuBar />
      <Toolbar />
      <div className="flex h-[593px] shrink-0">
        <Sidebar />
        <StoryView />
      </div>
      <SheetTabs />
      <StatusBar />
      <Taskbar />
    </div>
  );
}
